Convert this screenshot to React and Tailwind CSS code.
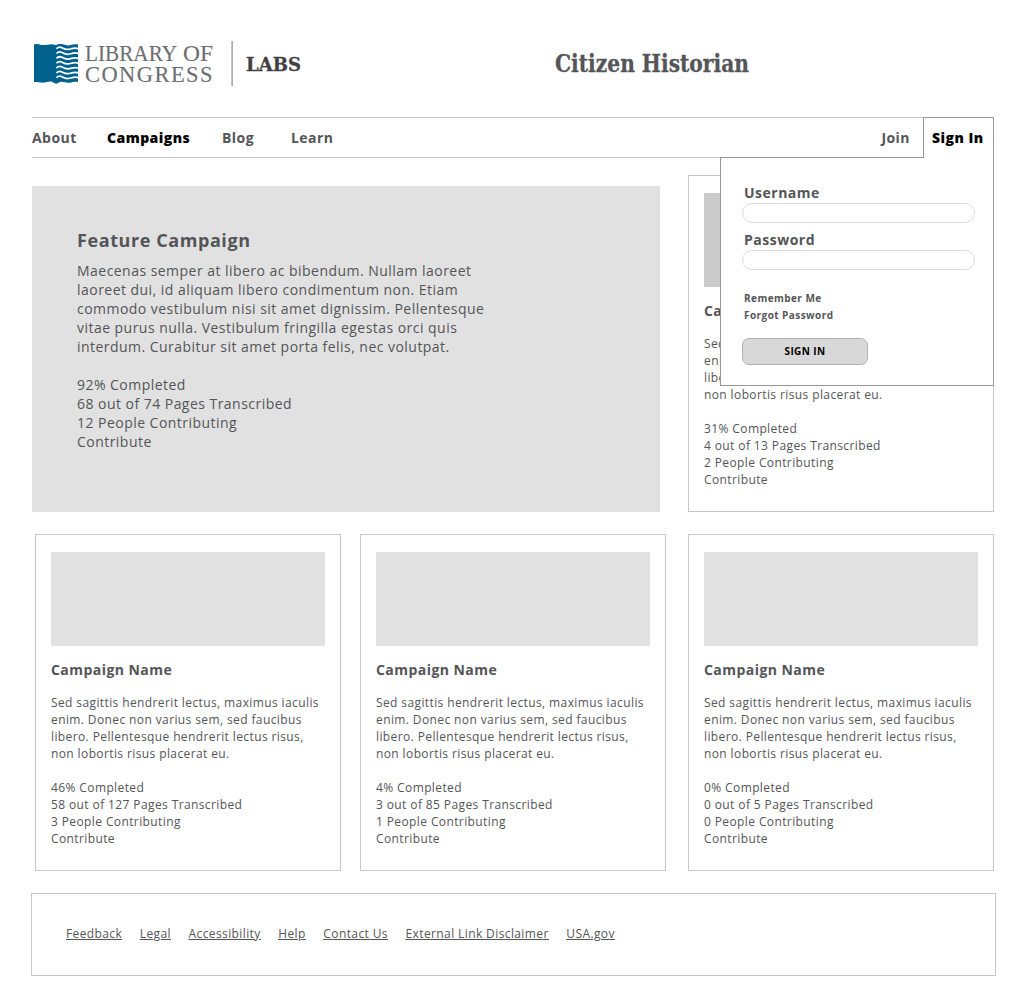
const BODY =
  'Sed sagittis hendrerit lectus, maximus iaculis\nenim. Donec non varius sem, sed faucibus\nlibero. Pellentesque hendrerit lectus risus,\nnon lobortis risus placerat eu.';

function Logo() {
  const rows = [0, 1, 2, 3, 4, 5, 6];
  return (
    <svg className="block h-[50px] w-[280px]" viewBox="0 0 280 50" aria-label="Library of Congress Labs">
      <path
        d="M2 4.6C5 3.6 7 4.3 9 4.9C13 5.6 16 4.1 20 4.2C22.500 4.3 23 5.2 24 5.2C25.500 4 28 3.5 31 4.3C35 5.8 38 5.6 41 4.6C43 4 45 4.2 46 4.600V42.100C43 41.300 40 42.300 38 42.700C34 43.200 31 41.300 28 42C26.500 42.400 25.500 43.800 24 43.700C22 43.600 21.500 41.800 19 41.500C16 41.200 13 42.900 10 42.600C7 42.300 5 41.500 2 42.100Z"
        fill="#00618f"
      />
      {rows.map((i) => (
        <path
          key={i}
          d="M24.500 8.700C26 6.900 28.500 6.800 30.500 7.900C33.500 9.700 36.500 9.800 39.500 8.700C42 7.900 44 7.900 46.300 8.600"
          transform={`translate(0 ${i * 4.85})`}
          fill="none"
          stroke="#fff"
          strokeWidth="1.75"
        />
      ))}
      <g fill="#6d6e71" stroke="#6d6e71" strokeWidth="0.1" fontFamily="'Liberation Serif', serif">
        <text x="53" y="21" fontSize="23" textLength="92" lengthAdjust="spacingAndGlyphs">LIBRARY</text>
        <text x="151" y="21" fontSize="23" textLength="30" lengthAdjust="spacingAndGlyphs">OF</text>
        <text x="53" y="42" fontSize="23" letterSpacing="1.5" textLength="129" lengthAdjust="spacingAndGlyphs">CONGRESS</text>
      </g>
      <rect x="199.500" y="1" width="1.200" height="45" fill="#8a8a8c" />
      <text x="214" y="31" fontSize="19" fontWeight="700" fill="#414042" stroke="#414042" strokeWidth="0.3" fontFamily="'Roboto Slab', 'DejaVu Serif', serif" textLength="55" lengthAdjust="spacingAndGlyphs">LABS</text>
    </svg>
  );
}

function CampaignCard({ stats, image = 'bg-[#e1e1e1]' }) {
  return (
    <article className="h-[337px] w-[306px] shrink-0 border border-[#c7c7c7] px-[15px] pt-[17px] text-xs leading-[17px] tracking-[0.39px]">
      <div className={`h-[94px] ${image}`} />
      <h3 className="mt-[14px] text-sm leading-[19px] font-bold tracking-[0.45px]">Campaign Name</h3>
      <p className="mt-[15px] whitespace-pre">{BODY}</p>
      <p className="mt-[17px] whitespace-pre">{stats}</p>
    </article>
  );
}

function SignInPanel() {
  return (
    <form className="absolute top-[39px] right-0 z-10 h-[229px] w-[274px] border border-[#979797] bg-white pt-[25px] pl-[21px]">
      <span className="absolute -top-px right-0 h-px w-[69px] bg-white" />
      <label className="block text-sm leading-[19px] font-bold tracking-[0.5px]">
        <span className="block pl-[2px]">Username</span>
        <input className="mt-px block h-5 w-[233px] rounded-full border border-[#dcdcdc] px-2" />
      </label>
      <label className="mt-[7px] block text-sm leading-[19px] font-bold tracking-[0.5px]">
        <span className="block pl-[2px]">Password</span>
        <input type="password" className="mt-px block h-5 w-[233px] rounded-full border border-[#dcdcdc] px-2" />
      </label>
      <div className="mt-5 pl-[2px] text-[10px] leading-[17px] font-bold tracking-[0.44px]">
        <div>Remember Me</div>
        <div>Forgot Password</div>
      </div>
      <button type="button" className="mt-[14px] h-[27px] w-[126px] rounded-[7px] border border-[#b2b2b2] bg-[#d8d8d8] text-[10px] font-bold tracking-[0.4px] text-black">
        SIGN IN
      </button>
    </form>
  );
}

const LINKS = ['Feedback', 'Legal', 'Accessibility', 'Help', 'Contact Us', 'External Link Disclaimer', 'USA.gov'];

export default function App() {
  return (
    <div className="h-[1007px] w-[1024px] overflow-hidden bg-white font-['Open_Sans',sans-serif] text-[#545558]">
      <header className="flex h-[117px] items-start pt-10 pl-8">
        <Logo />
        <h1 className="mt-[7px] ml-[243px]">
          <svg className="block h-8 w-[204px]" viewBox="0 0 204 32">
            <text x="0" y="24.500" fontSize="23.500" fontWeight="700" fill="#545558" stroke="#545558" strokeWidth="0.3" fontFamily="'Roboto Slab', 'DejaVu Serif', serif" textLength="194" lengthAdjust="spacingAndGlyphs">Citizen Historian</text>
          </svg>
        </h1>
      </header>

      <nav className="relative ml-8 flex h-[41px] w-[962px] items-center border-y border-[#c7c7c7] text-sm font-bold tracking-[0.45px]">
        <a className="w-[75px]">About</a>
        <a className="w-[115px] font-extrabold text-black">Campaigns</a>
        <a className="w-[69px]">Blog</a>
        <a>Learn</a>
        <a className="mr-[13px] ml-auto">Join</a>
        <a className="relative z-20 -my-px flex h-[41px] w-[71px] items-center border border-b-0 border-[#979797] bg-white pl-2 font-extrabold text-black">
          Sign In
        </a>
        <SignInPanel />
      </nav>

      <main>
        <div className="mt-[17px] ml-8 flex items-end gap-7">
          <section className="h-[326px] w-[628px] bg-[#e1e1e1] pt-[42px] pl-[45px] text-sm leading-[19px] tracking-[0.465px]">
            <h2 className="text-lg leading-[25px] font-bold tracking-[0.58px]">Feature Campaign</h2>
            <p className="mt-2 whitespace-pre">
              {'Maecenas semper at libero ac bibendum. Nullam laoreet\nlaoreet dui, id aliquam libero condimentum non. Etiam\ncommodo vestibulum nisi sit amet dignissim. Pellentesque\nvitae purus nulla. Vestibulum fringilla egestas orci quis\ninterdum. Curabitur sit amet porta felis, nec volutpat.'}
            </p>
            <p className="mt-[19px] whitespace-pre">
              {'92% Completed\n68 out of 74 Pages Transcribed\n12 People Contributing\nContribute'}
            </p>
          </section>
          <CampaignCard image="bg-[#cbcbcb]" stats={'31% Completed\n4 out of 13 Pages Transcribed\n2 People Contributing\nContribute'} />
        </div>
        <div className="mt-[22px] ml-[35px] flex">
          <CampaignCard stats={'46% Completed\n58 out of 127 Pages Transcribed\n3 People Contributing\nContribute'} />
          <div className="w-[19px]" />
          <CampaignCard stats={'4% Completed\n3 out of 85 Pages Transcribed\n1 People Contributing\nContribute'} />
          <div className="w-[22px]" />
          <CampaignCard stats={'0% Completed\n0 out of 5 Pages Transcribed\n0 People Contributing\nContribute'} />
        </div>
      </main>

      <footer className="mt-[22px] ml-[31px] flex h-[83px] w-[965px] items-center gap-[17.6px] border border-[#c7c5c7] pb-[2px] pl-[34px] text-xs tracking-[0.39px] underline">
        {LINKS.map((label) => (
          <a key={label}>{label}</a>
        ))}
      </footer>
    </div>
  );
}
